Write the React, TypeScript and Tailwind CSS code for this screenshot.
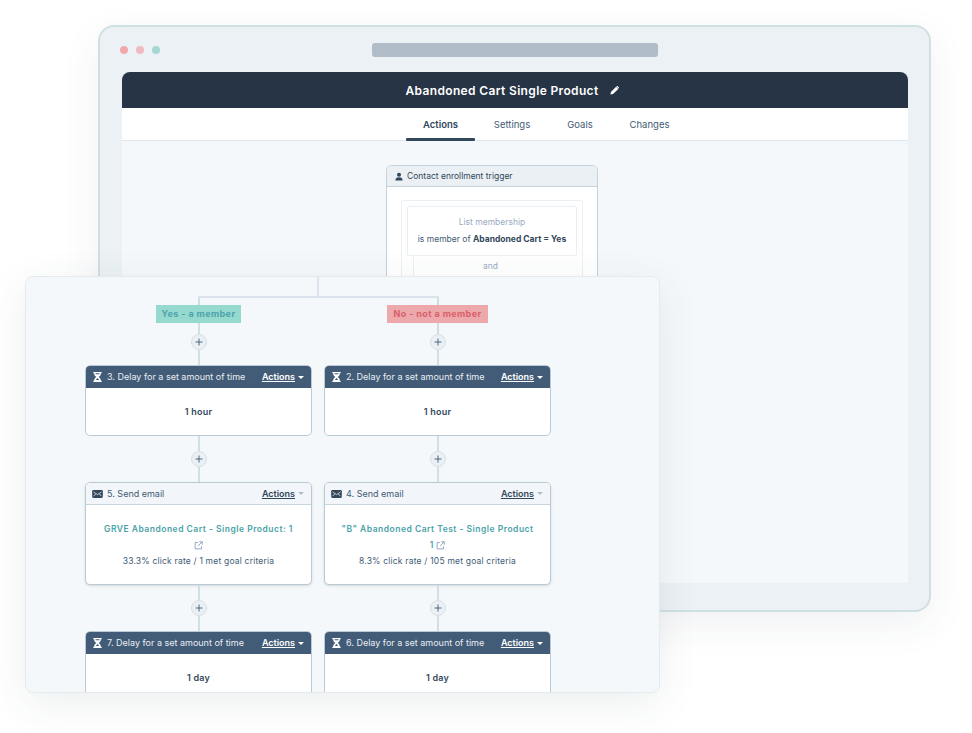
const Hourglass = () => (
  <svg viewBox="0 0 10 12" className="h-[10px] w-[9px] shrink-0 fill-current">
    <path
      fillRule="evenodd"
      d="M0 0h10v1.500H9c0 2-1 3.400-2.600 4.500C8 7.100 9 8.500 9 10.500h1V12H0v-1.500h1c0-2 1-3.400 2.600-4.500C2 4.900 1 3.500 1 1.500H0V0zm2.600 1.500c0 .4.100.8.200 1.200h4.400c.100-.4.200-.8.200-1.200H2.600zM5 7.200c-.9.700-1.500 1.500-1.900 2.500h3.800C6.500 8.700 5.900 7.900 5 7.200z"
    />
  </svg>
);

const Envelope = () => (
  <svg viewBox="0 0 12 9" className="h-[8px] w-[11px] shrink-0">
    <rect width="12" height="9" rx="1.300" fill="#33475b" />
    <path d="M1.500 2.200 6 5.200l4.500-3M1.500 7l2.600-2.700M10.500 7 7.900 4.300" stroke="#fff" strokeWidth="0.8" fill="none" />
  </svg>
);

const OpenLink = () => (
  <svg viewBox="0 0 12 12" className="h-[9px] w-[9px] shrink-0 fill-none stroke-[#7c98b6]" strokeWidth="1.100">
    <path d="M5 2H1.500v8.500H10V7M7 1h4v4M11 1 5.500 6.500" />
  </svg>
);

const Caret = ({ className }: { className: string }) => (
  <span className={`ml-[3px] h-0 w-0 border-x-[3px] border-t-[3px] border-x-transparent ${className}`} />
);

const Plus = () => (
  <div className="flex h-4 w-4 items-center justify-center rounded-full border border-[#d5e0e8] bg-[#eaf0f4]">
    <svg viewBox="0 0 8 8" className="h-2 w-2 stroke-[#425b76]" strokeWidth="0.9">
      <path d="M4 .5v7M.5 4h7" />
    </svg>
  </div>
);

const Line = ({ className }: { className: string }) => <div className={`w-0.5 bg-[#cfe0e4] ${className}`} />;

const DelayCard = ({ title, value, height }: { title: string; value: string; height: string }) => (
  <div className={`w-full shrink-0 overflow-hidden rounded-[5px] border border-[#b9cad7] bg-white ${height}`}>
    <div className="flex h-[22px] items-center bg-[#425b76] pl-[7px] pr-[7px] text-white">
      <Hourglass />
      <span className="ml-[5px] text-[9px] text-[#e8eef3]">{title}</span>
      <span className="ml-auto text-[9px] font-semibold underline">Actions</span>
      <Caret className="border-t-white" />
    </div>
    <div className="pt-[17px] text-center text-[9px] font-semibold tracking-[0.2px] text-[#33475b]">{value}</div>
  </div>
);

const EmailCard = ({ title, link, linkTail, stat }: { title: string; link: string; linkTail?: string; stat: string }) => (
  <div className="h-[103px] w-full shrink-0 overflow-hidden rounded-[5px] border border-[#b9cad7] bg-white shadow-sm">
    <div className="flex h-[22px] items-center border-b border-[#c5d6de] bg-[#f2f5f9] pl-[6px] pr-[7px] text-[#33475b]">
      <Envelope />
      <span className="ml-[4px] text-[9px] text-[#425b76]">{title}</span>
      <span className="ml-auto text-[9px] font-semibold underline">Actions</span>
      <Caret className="border-t-[#b0bdc9]" />
    </div>
    <div className="flex flex-col items-center pt-[16px] text-[8.500px] leading-[16px]">
      <div className="whitespace-nowrap font-semibold tracking-[0.5px] text-[#4aa3a8]">{link}</div>
      <div className="flex h-4 items-center gap-[3px] font-semibold text-[#4aa3a8]">
        {linkTail}
        <OpenLink />
      </div>
      <div className="whitespace-nowrap tracking-[0.2px] text-[#425b76]">{stat}</div>
    </div>
  </div>
);

const Branch = ({
  tag,
  tagClass,
  cards,
}: {
  tag: string;
  tagClass: string;
  cards: React.ReactNode[];
}) => (
  <div className="flex w-[227px] shrink-0 flex-col items-center">
    <Line className="h-[7px]" />
    <div className={`flex h-[18px] items-center whitespace-nowrap text-[9px] font-bold tracking-[0.4px] ${tagClass}`}>{tag}</div>
    <Line className="h-[11px]" />
    <Plus />
    <Line className="h-[15px]" />
    {cards[0]}
    <Line className="h-[15px]" />
    <Plus />
    <Line className="h-[15px]" />
    {cards[1]}
    <Line className="h-[15px]" />
    <Plus />
    <Line className="h-[15px]" />
    {cards[2]}
  </div>
);

export default function App() {
  return (
    <div className="relative h-[733px] w-[972px] overflow-hidden bg-white font-[Inter,sans-serif]">
      {/* browser window behind */}
      <div className="absolute left-[98px] top-[25px] flex h-[587px] w-[833px] flex-col rounded-[16px] border-2 border-[#cfe0e0] bg-[#ebf1f4] pl-[22px] pr-[21px] shadow-[0_12px_40px_rgba(45,62,80,0.07)]">
        <div className="relative flex h-[45px] shrink-0 items-center justify-center pt-[1px]">
          <div className="absolute left-[-2px] flex gap-2">
            <span className="h-2 w-2 rounded-full bg-[#f2a9ab]" />
            <span className="h-2 w-2 rounded-full bg-[#efb9c0]" />
            <span className="h-2 w-2 rounded-full bg-[#a5d8d3]" />
          </div>
          <div className="h-[14px] w-[286px] rounded-[3px] bg-[#b0bdc9]" />
        </div>
        <div className="flex h-[36px] shrink-0 items-center justify-center rounded-t-[8px] bg-[#263445] pr-[6px] pt-[1px] text-white">
          <span className="text-[12px] font-semibold tracking-[0.35px]">Abandoned Cart Single Product</span>
          <svg viewBox="0 0 10 10" className="ml-[11px] h-[9px] w-[9px] fill-white">
            <path d="M6.800.8 9.200 3.200 3.400 9 .5 9.500 1 6.600zM7.500.1a.6.6 0 0 1 .8 0L9.900 1.700a.6.6 0 0 1 0 .8l-.4.4L7.100.5z" />
          </svg>
        </div>
        <div className="flex h-[33px] shrink-0 items-center gap-[3px] border-b border-[#dfe8ec] bg-white pl-[284px] text-[9.500px] text-[#425b76]">
          <div className="relative flex h-full w-[69px] items-center justify-center pt-[2px] font-semibold text-[#33475b]">
            Actions
            <span className="absolute inset-x-0 bottom-[-1px] h-[3px] rounded-[1px] bg-[#33475b]" />
          </div>
          <div className="flex h-full w-[68px] items-center justify-center pt-[2px]">Settings</div>
          <div className="flex h-full w-[62px] items-center justify-center pt-[2px]">Goals</div>
          <div className="flex h-full w-[71px] items-center justify-center pt-[2px]">Changes</div>
        </div>
        <div className="h-[442px] overflow-hidden bg-[#f5f8fa] pl-[264px] pt-[24px]">
          <div className="w-[212px] overflow-hidden rounded-t-[5px] border border-[#c5d3de] bg-white">
            <div className="flex h-[21px] items-center gap-[4px] border-b border-[#c5d3de] bg-[#eaf0f4] pl-[8px] text-[8.500px] text-[#33475b]">
              <svg viewBox="0 0 10 10" className="h-[9px] w-[8px] fill-[#33475b]">
                <circle cx="5" cy="2.800" r="2.500" />
                <path d="M.5 10c0-3 1.500-4.200 4.500-4.200S9.500 7 9.500 10z" />
              </svg>
              Contact enrollment trigger
            </div>
            <div className="px-[14px] pt-[13px]">
              <div className="h-[90px] rounded-[2px] border border-[#eaf0f4] p-[5px]">
                <div className="flex h-[50px] flex-col items-center justify-center gap-[4px] rounded-[2px] border border-[#eaf0f4] text-[8.500px]">
                  <span className="text-[#99acc2]">List membership</span>
                  <span className="whitespace-nowrap text-[#425b76]">
                    is member of <b className="font-bold text-[#33475b]">Abandoned Cart = Yes</b>
                  </span>
                </div>
                <div className="flex">
                  <div className="ml-[6px] h-[24px] w-px bg-[#eaf0f4]" />
                  <div className="flex-1 pr-[10px] pt-[4px] text-center text-[8.500px] text-[#99acc2]">and</div>
                </div>
              </div>
            </div>
          </div>
        </div>
      </div>

      {/* workflow panel in front */}
      <div className="absolute left-[25px] top-[276px] flex h-[417px] w-[635px] flex-col overflow-hidden rounded-[8px] border border-[#e3ebee] bg-[#f5f8fa] pl-[59px] shadow-[0_10px_40px_rgba(45,62,80,0.09)]">
        <div className="flex w-[466px] flex-col items-center">
          <div className="h-[19px] w-0.5 bg-[#dbe3ec]" />
          <div className="h-0.5 w-[241px] bg-[#dbe3ec]" />
          <div className="flex w-full justify-between">
            <Branch
              tag="Yes - a member"
              tagClass="w-[85px] justify-center bg-[#95d9cf] text-[#4fa3ad]"
              cards={[
                <DelayCard key="a" title="3. Delay for a set amount of time" value="1 hour" height="h-[71px]" />,
                <EmailCard
                  key="b"
                  title="5. Send email"
                  link="GRVE Abandoned Cart - Single Product: 1"
                  stat="33.3% click rate / 1 met goal criteria"
                />,
                <DelayCard key="c" title="7. Delay for a set amount of time" value="1 day" height="h-[71px]" />,
              ]}
            />
            <Branch
              tag="No - not a member"
              tagClass="w-[101px] justify-center bg-[#eca8ab] text-[#d9606a]"
              cards={[
                <DelayCard key="a" title="2. Delay for a set amount of time" value="1 hour" height="h-[71px]" />,
                <EmailCard
                  key="b"
                  title="4. Send email"
                  link={'"B" Abandoned Cart Test - Single Product'}
                  linkTail="1"
                  stat="8.3% click rate / 105 met goal criteria"
                />,
                <DelayCard key="c" title="6. Delay for a set amount of time" value="1 day" height="h-[71px]" />,
              ]}
            />
          </div>
        </div>
      </div>
    </div>
  );
}
